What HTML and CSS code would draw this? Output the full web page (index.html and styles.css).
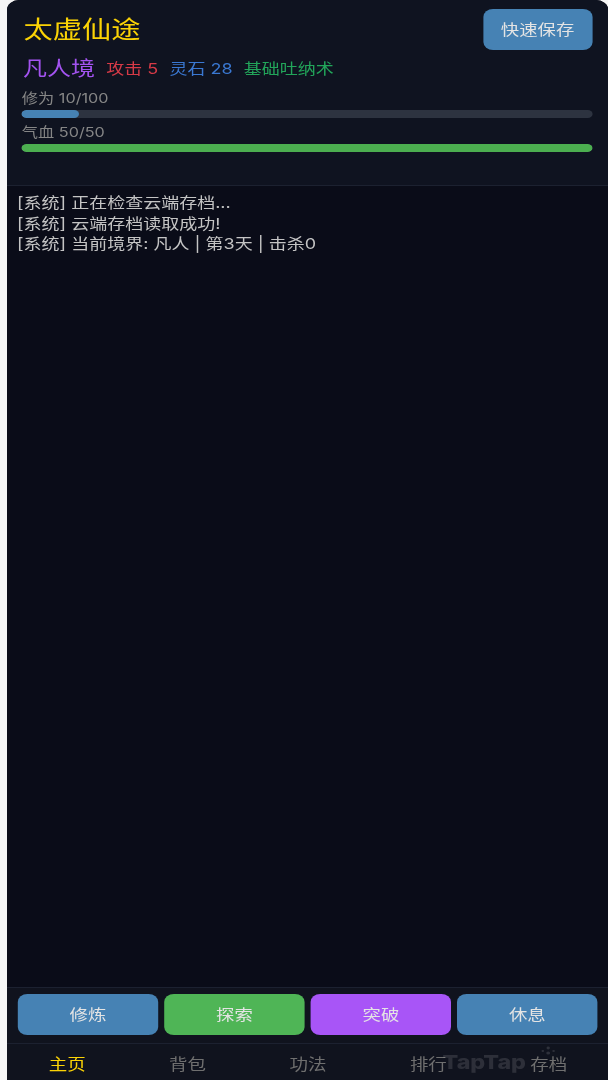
FILE: index.html
```html
<!DOCTYPE html>
<html lang="zh">
<head>
<meta charset="utf-8">
<title>太虚仙途</title>
<link rel="stylesheet" href="styles.css">
</head>
<body>
<div class="app">
  <header class="header">
    <div class="top">
      <h1 class="title">太虚仙途</h1>
      <button class="save">快速保存</button>
    </div>
    <div class="stats">
      <span class="realm">凡人境</span>
      <span class="atk">攻击 5</span>
      <span class="stone">灵石 28</span>
      <span class="skill">基础吐纳术</span>
    </div>
    <div class="label">修为 10/100</div>
    <div class="bar"><div class="fill fill-blue" style="width:10%"></div></div>
    <div class="label label-hp">气血 50/50</div>
    <div class="bar"><div class="fill fill-green" style="width:100%"></div></div>
  </header>
  <main class="log">
    <div>[系统] 正在检查云端存档...</div>
    <div>[系统] 云端存档读取成功!</div>
    <div>[系统] 当前境界: 凡人 | 第3天 | 击杀0</div>
  </main>
  <div class="actions">
    <button class="act blue">修炼</button>
    <button class="act green">探索</button>
    <button class="act purple">突破</button>
    <button class="act blue">休息</button>
  </div>
  <nav class="nav">
    <span class="tab active">主页</span>
    <span class="tab">背包</span>
    <span class="tab">功法</span>
    <span class="tab">排行</span>
    <span class="tab">存档</span>
  </nav>
  <div class="watermark">TapTap</div>
  <svg class="spark" width="14" height="12" viewBox="0 0 14 12">
    <g fill="rgba(255,255,255,0.13)">
      <circle cx="7" cy="2" r="1.4"/>
      <circle cx="2.5" cy="5" r="1.1"/>
      <circle cx="11.5" cy="5" r="1.1"/>
      <circle cx="7" cy="7" r="1.6"/>
    </g>
  </svg>
</div>
</body>
</html>
```
FILE: styles.css
```css
* { box-sizing: border-box; }
html, body { margin: 0; height: 100%; }
body {
  background: #f6f6f6;
  font-family: "Inter", "Noto Sans CJK SC", sans-serif;
  overflow: hidden;
}
/* The reference is stretched 1.2x horizontally; lay out at 501px and scale. */
.app {
  position: relative;
  margin-left: 7px;
  width: 500.83px;
  height: 1080px;
  background: #0a0c18;
  border-radius: 10px 10px 0 0;
  overflow: hidden;
  display: flex;
  flex-direction: column;
  transform: scaleX(1.2);
  transform-origin: left top;
  filter: blur(0.45px);
}
.header {
  height: 186px;
  flex: none;
  background: #0f1320;
  border-bottom: 1px solid #1c2130;
  padding: 9px 13.3px 0 12.4px;
}
.top { display: flex; justify-content: space-between; align-items: flex-start; height: 41px; }
.title { margin: 0; font-size: 24.4px; line-height: 40px; font-weight: 400; color: #fbd305; padding-left: 1.3px; }
.save {
  width: 90.8px; height: 41px; border: 0; border-radius: 8px;
  background: #4682b4; color: #e4e4e4; font: inherit; font-size: 15.3px; padding: 0 0 4px;
}
.stats { display: flex; align-items: center; gap: 9.3px; margin-top: 3px; height: 28px; padding-left: 1px; font-size: 15px; }
.realm { font-size: 20px; color: #a353f0; }
.atk { color: #d63a47; }
.stone { color: #3a78d2; }
.skill { color: #22a55a; }
.label { font-size: 13.5px; line-height: 20px; color: #868686; margin-top: 7px; }
.label-hp { margin-top: 4px; }
.bar { height: 8px; background: #2d3340; border-radius: 4px; overflow: hidden; margin-top: 2px; width: 476px; }
.fill { height: 100%; border-radius: 4px; }
.fill-blue { background: #4682b4; }
.fill-green { background: #4caf50; }
.log {
  flex: 1;
  padding: 7px 8.3px;
  font-size: 15px;
  line-height: 20.5px;
  color: #c4c4c4;
}
.actions {
  flex: none;
  height: 56px;
  display: grid;
  grid-template-columns: repeat(4, 116.67px);
  gap: 5.4px;
  padding: 6px 0 8px 9.17px;
  background: #10131e;
  border-top: 1px solid #1c2130;
}
.act { border: 0; border-radius: 8px; font: inherit; font-size: 15.3px; color: #e4e4e4; padding: 0 0 4px; }
.blue { background: #4682b4; }
.green { background: #4fb556; }
.purple { background: #a855f7; }
.nav {
  flex: none;
  height: 37px;
  display: grid;
  grid-template-columns: repeat(5, 100.33px);
  background: #10131e;
  border-top: 1px solid #1c2130;
}
.tab { font-size: 15.4px; line-height: 42px; text-align: center; color: #6f6f6f; }
.active { color: #fbd305; }
.watermark {
  position: absolute;
  left: 363px;
  top: 1049px;
  font-size: 19.4px;
  font-weight: 800;
  line-height: 26px;
  color: rgba(255,255,255,0.12);
}
.spark {
  position: absolute;
  left: 444px;
  top: 1046px;
}
```
